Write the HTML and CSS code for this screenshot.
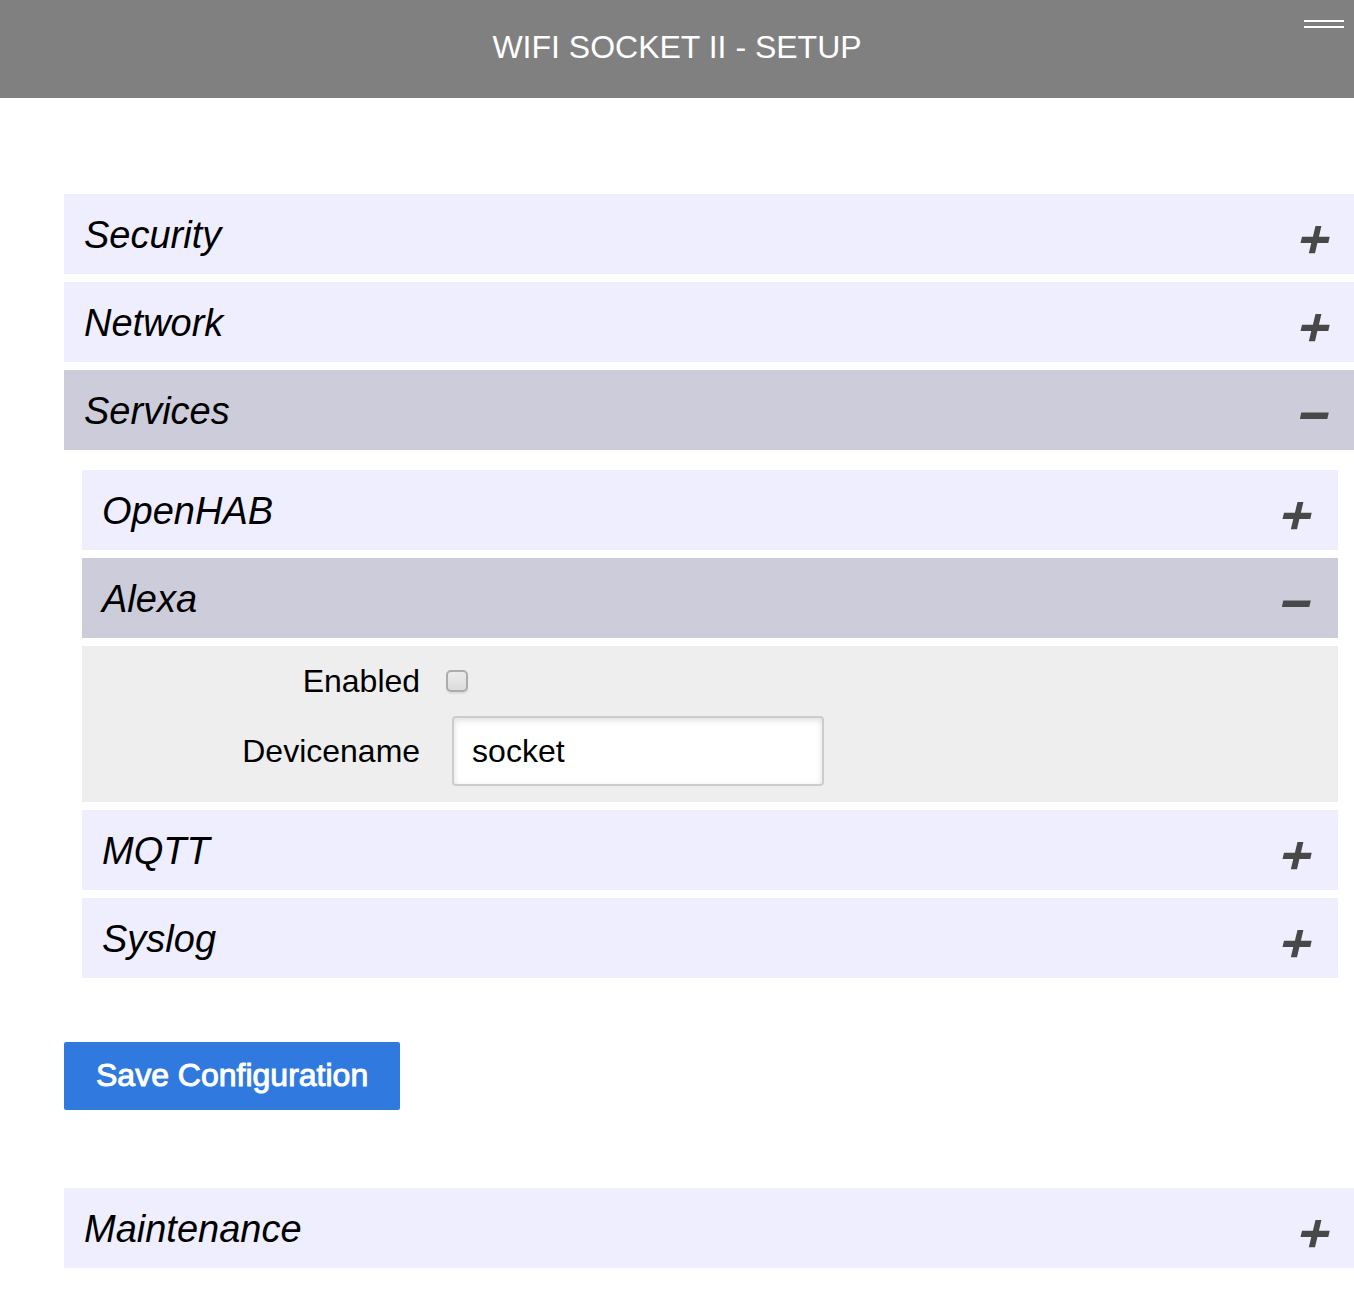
FILE: index.html
```html
<!DOCTYPE html>
<html lang="en">
<head>
<meta charset="utf-8">
<meta name="viewport" content="width=device-width, initial-scale=1">
<title>WiFi Socket II - Setup</title>
<link rel="stylesheet" href="styles.css">
</head>
<body>
<svg width="0" height="0" class="symbols" aria-hidden="true">
  <symbol id="plus" viewBox="0 0 30 28"><path d="M2 10.7H12.9L15.5 0H21.4L18.9 10.7H29.7L28.3 17H17.4L15 27.3H8.8L11.3 17H.5Z"/></symbol>
  <symbol id="minus" viewBox="0 0 30 28"><path d="M1.3 10.5H28.8L27.3 17H-.2Z"/></symbol>
</svg>
<header class="topbar">
  <h1 class="title">WIFI SOCKET II - SETUP</h1>
  <button class="menu" type="button" aria-label="Menu"><span class="menu-line"></span><span class="menu-line"></span></button>
</header>
<main class="content">
  <form class="form">
    <div class="accordion">
      <button class="section" type="button" aria-expanded="false">Security<svg class="icon"><use href="#plus"/></svg></button>
      <button class="section" type="button" aria-expanded="false">Network<svg class="icon"><use href="#plus"/></svg></button>
      <button class="section" type="button" aria-expanded="true">Services<svg class="icon"><use href="#minus"/></svg></button>
    </div>
    <div class="accordion nested">
      <button class="section" type="button" aria-expanded="false">OpenHAB<svg class="icon"><use href="#plus"/></svg></button>
      <button class="section" type="button" aria-expanded="true">Alexa<svg class="icon"><use href="#minus"/></svg></button>
      <div class="panel">
        <div class="field">
          <label class="label" for="enabled">Enabled</label>
          <input class="checkbox" type="checkbox" id="enabled">
        </div>
        <div class="field">
          <label class="label" for="devicename">Devicename</label>
          <input class="textbox" type="text" id="devicename" value="socket">
        </div>
      </div>
      <button class="section" type="button" aria-expanded="false">MQTT<svg class="icon"><use href="#plus"/></svg></button>
      <button class="section" type="button" aria-expanded="false">Syslog<svg class="icon"><use href="#plus"/></svg></button>
    </div>
    <button class="save" type="submit">Save Configuration</button>
  </form>
  <div class="accordion">
    <button class="section" type="button" aria-expanded="false">Maintenance<svg class="icon"><use href="#plus"/></svg></button>
  </div>
</main>
</body>
</html>
```
FILE: styles.css
```css
* {
  box-sizing: border-box;
}

body {
  margin: 0;
  background: #fff;
  color: #000;
  font: 32px/38px "Liberation Sans", Arial, sans-serif;
}

button,
input {
  margin: 0;
  border: 0;
  font: inherit;
  color: inherit;
}

.symbols {
  display: none;
}

.topbar {
  display: grid;
  grid-template-columns: 1fr auto 1fr;
  align-items: start;
  background: #808080;
  color: #fff;
}

.title {
  grid-column: 2;
  margin: 0;
  padding: 28px 0 32px;
  font-size: 32px;
  font-weight: 400;
}

.menu {
  display: flex;
  flex-direction: column;
  gap: 4px;
  justify-self: end;
  padding: 20px 10px;
  background: none;
}

.menu-line {
  width: 40px;
  height: 2px;
  background: #fff;
}

.content {
  padding: 96px 0 38px 64px;
}

.form {
  margin-bottom: 78px;
}

.accordion {
  display: flex;
  flex-direction: column;
  gap: 8px;
}

.nested {
  margin: 20px 16px 64px 18px;
}

.section {
  display: flex;
  align-items: center;
  justify-content: space-between;
  padding: 21px 24px 19px 20px;
  background: #eeeeff;
  font-size: 38px;
  line-height: 40px;
  font-style: italic;
  text-align: left;
}

.nested .section {
  padding-right: 26px;
}

.section[aria-expanded="true"] {
  background: #ccccda;
}

.icon {
  width: 30px;
  height: 40px;
  padding-top: 11px;
  padding-bottom: 1px;
  overflow: visible;
  fill: #484848;
}

.panel {
  padding-bottom: 16px;
  background: #eee;
}

.field {
  display: grid;
  grid-template-columns: 27% 1fr;
  align-items: center;
  min-height: 70px;
}

.label {
  padding-right: 1px;
  text-align: right;
}

.checkbox {
  appearance: none;
  width: 22px;
  height: 22px;
  margin-left: 25px;
  border: 2px solid #acacac;
  border-radius: 5px;
  background: linear-gradient(#ebebeb, #dcdcdc);
  box-shadow: 0 2px 1px #dcdcdc;
}

.checkbox:checked {
  background: #2f79df;
}

.textbox {
  width: 372px;
  max-width: 100%;
  height: 70px;
  margin-left: 31px;
  padding: 0 18px;
  border: 2px solid #ccc;
  border-radius: 4px;
  background: #fff;
  box-shadow: inset 0 2px 6px #ddd;
}

.save {
  display: block;
  padding: 14px 32px 16px;
  border-radius: 2px;
  background: #2f79df;
  color: #fff;
  -webkit-text-stroke: 1px #fff;
}
```
